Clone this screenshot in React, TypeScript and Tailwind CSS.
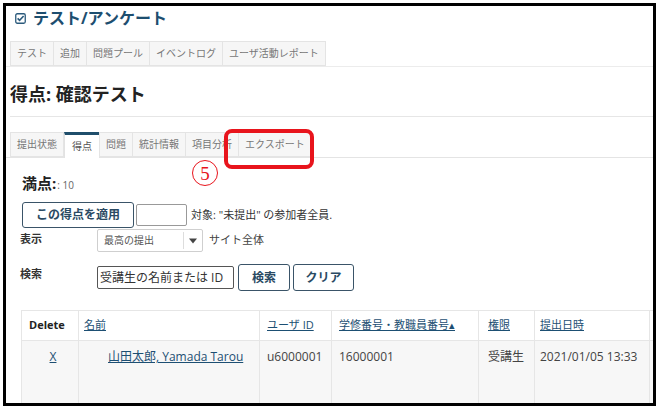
import React from 'react';

const FONT = { fontFamily: '"Open Sans", "Noto Sans CJK JP", sans-serif' };

const topTabs = ['テスト', '追加', '問題プール', 'イベントログ', 'ユーザ活動レポート'];
const subTabs = ['提出状態', '得点', '問題', '統計情報', '項目分析', 'エクスポート'];

// checkbox glyph next to the tool title
const CheckIcon: React.FC = () => (
  <svg width="11" height="11" viewBox="0 0 11 11" className="shrink-0">
    <rect x="0.75" y="0.75" width="9.5" height="9.5" rx="1.5" fill="none" stroke="#2b5a7c" strokeWidth="1.3" />
    <path d="M2.6 5.4 L4.6 7.4 L8.6 3" fill="none" stroke="#2b5a7c" strokeWidth="1.6" />
  </svg>
);

const Tab: React.FC<{ label: string; active?: boolean }> = ({ label, active }) => (
  <div
    className={
      active
        ? 'h-[26px] px-[7px] flex items-center bg-white border-x border-[#e2e2e2] border-t-[3px] border-t-[#1f4e6b] -mb-px text-[10px] text-[#555]'
        : 'h-[25px] px-[6px] flex items-center bg-[#f6f6f6] border border-[#e4e4e4] -ml-px text-[10px] text-[#777]'
    }
  >
    {label}
  </div>
);

export default function App() {
  return (
    <div className="w-[661px] h-[411px] bg-white" style={FONT}>
      <div className="relative ml-[3px] mt-[3px] w-[653px] h-[403px] border-[3px] border-black overflow-hidden bg-white">
        {/* tool title */}
        <div className="flex items-center gap-[7px] pl-[9px] mt-[2px] h-[20px]">
          <CheckIcon />
          <span className="text-[16px] font-bold text-[#1d4e6f] leading-[20px]">テスト/アンケート</span>
        </div>

        {/* top tool tabs */}
        <div className="flex mt-[13px] pl-[5px] border-b border-[#ececec]">
          {topTabs.map((t) => (
            <Tab key={t} label={t} />
          ))}
        </div>

        {/* page heading */}
        <h1 className="mt-[15px] pl-[4px] text-[18px] font-bold text-[#222] leading-[24px]">得点: 確認テスト</h1>
        <div className="mt-[10px] ml-[4px] border-t border-[#e6e6e6]" />

        {/* sub tabs */}
        <div className="flex items-end mt-[15px] pl-[5px] border-b border-[#e4e4e4]">
          {subTabs.map((t) => (
            <Tab key={t} label={t} active={t === '得点'} />
          ))}
        </div>

        <div className="pl-[14px]">
          <div className="mt-[14px] flex items-baseline h-[20px] pl-[2px]">
            <span className="text-[15px] font-bold text-[#222]">満点:</span>
            <span className="text-[10px] text-[#666] ml-[1px]">: 10</span>
          </div>

          <div className="mt-[10px] flex items-center h-[26px] pl-[2px]">
            <button className="h-[26px] w-[112px] border border-[#3a5468] rounded-[3px] bg-white text-[12px] font-bold text-[#2a4a63]">
              この得点を適用
            </button>
            <div className="ml-[2px] h-[22px] w-[51px] border border-[#999] rounded-[2px] bg-white" />
            <span className="ml-[4px] text-[11px] text-[#333]">対象: "未提出" の参加者全員.</span>
          </div>

          <div className="mt-[1px] flex h-[23px]">
            <span className="w-[77px] pt-[2px] text-[11px] font-bold text-[#333]">表示</span>
            <div className="flex items-center w-[106px] h-[23px] border border-[#cfcfcf] rounded-[2px] bg-white">
              <span className="flex-1 pl-[6px] text-[10px] text-[#555]">最高の提出</span>
              <div className="h-[17px] border-l border-[#ddd]" />
              <svg width="18" height="10" viewBox="0 0 18 10">
                <path d="M5 2.5 L13 2.5 L9 7.5 Z" fill="#444" />
              </svg>
            </div>
            <span className="ml-[6px] self-center text-[11px] text-[#444]">サイト全体</span>
          </div>

          <div className="mt-[12px] flex items-center h-[27px]">
            <span className="w-[77px] self-start pt-[2px] text-[11px] font-bold text-[#333]">検索</span>
            <div className="flex items-center w-[137px] h-[23px] border border-[#555] rounded-[2px] bg-white pl-[2px] text-[12px] text-[#333]">
              受講生の名前または ID
            </div>
            <button className="ml-[4px] h-[27px] w-[52px] border border-[#3a5468] rounded-[3px] bg-white text-[12px] font-bold text-[#2a4a63]">
              検索
            </button>
            <button className="ml-[3px] h-[27px] w-[61px] border border-[#3a5468] rounded-[3px] bg-white text-[12px] font-bold text-[#2a4a63]">
              クリア
            </button>
          </div>

          {/* results table */}
          <table className="mt-[19px] ml-[1px] border-collapse table-fixed w-[700px] text-[11px]">
            <colgroup>
              <col className="w-[57px]" />
              <col className="w-[181px]" />
              <col className="w-[72px]" />
              <col className="w-[147px]" />
              <col className="w-[56px]" />
              <col className="w-[115px]" />
              <col className="w-[72px]" />
            </colgroup>
            <thead>
              <tr className="h-[30px] bg-white">
                <th className="border border-[#e6e6e6] text-left pl-[7px] font-bold text-[#222]">Delete</th>
                <th className="border border-[#e6e6e6] text-left pl-[5px] font-normal">
                  <span className="underline text-[#1d4f73]">名前</span>
                </th>
                <th className="border border-[#e6e6e6] text-left pl-[7px] font-normal">
                  <span className="underline text-[#1d4f73]">ユーザ ID</span>
                </th>
                <th className="border border-[#e6e6e6] text-left pl-[7px] font-normal">
                  <span className="underline text-[#1d4f73]">学修番号・教職員番号▴</span>
                </th>
                <th className="border border-[#e6e6e6] text-left pl-[9px] font-normal">
                  <span className="underline text-[#1d4f73]">権限</span>
                </th>
                <th className="border border-[#e6e6e6] text-left pl-[5px] font-normal">
                  <span className="underline text-[#1d4f73]">提出日時</span>
                </th>
                <th className="border border-[#e6e6e6]" />
              </tr>
            </thead>
            <tbody>
              <tr className="h-[70px] bg-[#f7f7f7] align-top text-[12px] text-[#444]">
                <td className="border border-[#e6e6e6] text-center pt-[7px] pl-[6px]">
                  <span className="underline text-[#1d4f73]">X</span>
                </td>
                <td className="border border-[#e6e6e6] pt-[7px] pl-[29px]">
                  <span className="underline text-[#1d4f73]">山田太郎, Yamada Tarou</span>
                </td>
                <td className="border border-[#e6e6e6] pt-[7px] pl-[7px]">u6000001</td>
                <td className="border border-[#e6e6e6] pt-[7px] pl-[7px]">16000001</td>
                <td className="border border-[#e6e6e6] pt-[7px] pl-[9px]">受講生</td>
                <td className="border border-[#e6e6e6] pt-[7px] pl-[5px] whitespace-nowrap">2021/01/05 13:33</td>
                <td className="border border-[#e6e6e6]" />
              </tr>
            </tbody>
          </table>
        </div>

        {/* annotation overlay */}
        <div className="absolute left-[218px] top-[123px] w-[90px] h-[40px] border-[4px] border-[#e8141c] rounded-[8px]" />
        <div
          className="absolute left-[186px] top-[154px] w-[26px] h-[26px] rounded-full border-[1.5px] border-[#e8141c] flex items-center justify-center text-[19px] leading-none text-[#e8141c]"
          style={{ fontFamily: '"Liberation Serif", serif' }}
        >
          5
        </div>
      </div>
    </div>
  );
}
